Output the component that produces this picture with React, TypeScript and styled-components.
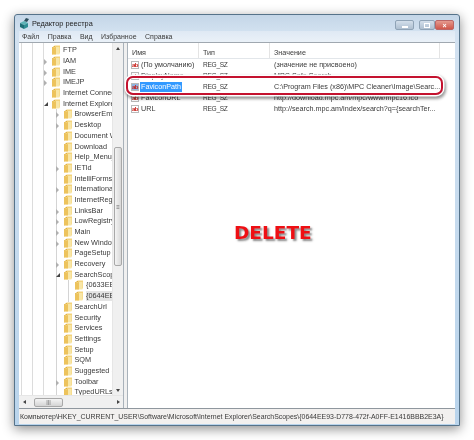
import React from "react";
import styled, { createGlobalStyle } from "styled-components";

const GlobalStyle = createGlobalStyle`
  html, body {
    margin: 0;
    padding: 0;
    background: #fff;
    overflow: hidden;
  }
`;

type Expand = "open" | "closed" | "none";
interface TreeNode {
  name: string;
  level: number;
  expand: Expand;
  selected?: boolean;
}

const treeNodes: TreeNode[] = [
  { name: "FTP", level: 2, expand: "none" },
  { name: "IAM", level: 2, expand: "closed" },
  { name: "IME", level: 2, expand: "closed" },
  { name: "IMEJP", level: 2, expand: "closed" },
  { name: "Internet Connection Wizard", level: 2, expand: "none" },
  { name: "Internet Explorer", level: 2, expand: "open" },
  { name: "BrowserEmulation", level: 3, expand: "closed" },
  { name: "Desktop", level: 3, expand: "closed" },
  { name: "Document Windows", level: 3, expand: "none" },
  { name: "Download", level: 3, expand: "none" },
  { name: "Help_Menu_URLs", level: 3, expand: "none" },
  { name: "IETld", level: 3, expand: "closed" },
  { name: "IntelliForms", level: 3, expand: "none" },
  { name: "International", level: 3, expand: "closed" },
  { name: "InternetRegistry", level: 3, expand: "none" },
  { name: "LinksBar", level: 3, expand: "closed" },
  { name: "LowRegistry", level: 3, expand: "closed" },
  { name: "Main", level: 3, expand: "closed" },
  { name: "New Windows", level: 3, expand: "closed" },
  { name: "PageSetup", level: 3, expand: "none" },
  { name: "Recovery", level: 3, expand: "closed" },
  { name: "SearchScopes", level: 3, expand: "open" },
  { name: "{0633EE93-D776}", level: 4, expand: "none" },
  { name: "{0644EE93-D778}", level: 4, expand: "none", selected: true },
  { name: "SearchUrl", level: 3, expand: "none" },
  { name: "Security", level: 3, expand: "none" },
  { name: "Services", level: 3, expand: "none" },
  { name: "Settings", level: 3, expand: "none" },
  { name: "Setup", level: 3, expand: "none" },
  { name: "SQM", level: 3, expand: "none" },
  { name: "Suggested Sites", level: 3, expand: "none" },
  { name: "Toolbar", level: 3, expand: "closed" },
  { name: "TypedURLs", level: 3, expand: "none" },
];

const values = [
  { name: "(По умолчанию)", data: "(значение не присвоено)" },
  { name: "DisplayName", data: "MPC Safe Search" },
  { name: "FaviconPath", data: "C:\\Program Files (x86)\\MPC Cleaner\\Image\\Searc...", selected: true },
  { name: "FaviconURL", data: "http://download.mpc.am/mpc/www/mpc16.ico" },
  { name: "URL", data: "http://search.mpc.am/index/search?q={searchTer..." },
];

const Folder = () => (
  <svg width="10" height="10" viewBox="0 0 10 10">
    <path d="M1 2.5 L4 .5 V8 L1 9.5 Z" fill="#e0b040" />
    <path d="M4 .5 H9 V8.5 H4 Z" fill="#f3d27a" />
    <path d="M2.5 2 H8.5 V9.5 H2.5 Z" fill="#f8e6a6" />
    <path d="M1 3 L5 2 V9.5 H1 Z" fill="#edc35c" />
  </svg>
);

const AppIcon = () => (
  <svg width="11" height="11" viewBox="0 0 11 11">
    <path d="M1 5 L5 3 L9 5 L5 7 Z" fill="#5fb4b8" />
    <path d="M1 5 V9 L5 11 V7 Z" fill="#1f6f78" />
    <path d="M5 7 V11 L9 9 V5 Z" fill="#2f8d94" />
    <path d="M5 3 L7 0 L10 1 L8 4 Z" fill="#2d4d5c" />
  </svg>
);

const ValueIcon = ({ selected }: { selected?: boolean }) => (
  <ValueIconBox $selected={selected}>ab</ValueIconBox>
);

const Page = styled.div`
  width: 474px;
  height: 440px;
  padding: 14px;
  box-sizing: border-box;
  background: #fff;
  font-family: "Liberation Sans", Arial, sans-serif;
  color: #3a3a3a;
  filter: blur(0.35px);
`;

const Window = styled.div`
  position: relative;
  width: 446px;
  height: 412px;
  box-sizing: border-box;
  display: flex;
  flex-direction: column;
  padding: 0 4px 1px;
  border: 1px solid #56738a;
  border-radius: 3px 3px 0 0;
  background: linear-gradient(180deg, #c4d6e8 0, #d3e2f1 18px, #b9d4ec 100%);
  box-shadow: 0 3px 12px rgba(0, 0, 0, 0.45);
`;

const TitleBar = styled.div`
  height: 16px;
  display: flex;
  align-items: center;
  gap: 2px;
  padding-top: 1px;
  box-sizing: border-box;
  font-size: 7.3px;
  color: #222;
`;

const WindowControls = styled.div`
  margin-left: auto;
  margin-right: 1px;
  align-self: flex-start;
  display: flex;
  margin-top: 4px;
`;

const ControlButton = styled.div<{ $close?: boolean; $wide?: boolean }>`
  width: ${({ $wide }) => ($wide ? "19px" : "16px")};
  height: 10px;
  margin-left: ${({ $close, $wide }) => ($close || $wide ? "0" : "5px")};
  display: flex;
  align-items: center;
  justify-content: center;
  border: 1px solid ${({ $close }) => ($close ? "#b66" : "#8fa3b6")};
  border-radius: 2px;
  box-sizing: border-box;
  background: ${({ $close }) =>
    $close ? "linear-gradient(180deg, #e59a8e, #d0574a)" : "linear-gradient(180deg, #d3dfeb, #aebfd0)"};
  color: #fff;
  font-size: 7px;
  font-weight: 700;
  line-height: 1;
`;

const MinimizeGlyph = styled.span`
  width: 6px;
  height: 2px;
  margin-top: 3px;
  background: #fff;
`;

const MaximizeGlyph = styled.span`
  width: 6px;
  height: 5px;
  box-sizing: border-box;
  border: 1px solid #fff;
`;

const MenuBar = styled.div`
  height: 11px;
  display: flex;
  align-items: center;
  gap: 8.5px;
  padding-left: 3px;
  font-size: 7px;
  background: linear-gradient(180deg, #dfe9f4, #eaf1f8);
`;

const Client = styled.div`
  flex: 1;
  min-height: 0;
  display: flex;
  background: #f0f0f0;
  border-top: 1px solid #a0a8b0;
`;

const TreePane = styled.div`
  width: 104px;
  display: flex;
  flex-direction: column;
  border-right: 1px solid #a9b2ba;
  background: #fff;
`;

const TreeBody = styled.div`
  flex: 1;
  min-height: 0;
  display: flex;
`;

const TreeList = styled.div`
  width: 93px;
  overflow: hidden;
  padding-top: 2px;
  background:
    linear-gradient(#dcdcdc, #dcdcdc) 2px 0 / 1px 100% no-repeat,
    linear-gradient(#dcdcdc, #dcdcdc) 13px 0 / 1px 100% no-repeat,
    linear-gradient(#dcdcdc, #dcdcdc) 24px 0 / 1px 100% no-repeat;
`;

const TreeRow = styled.div<{ $level: number }>`
  position: relative;
  height: 10.69px;
  display: flex;
  align-items: center;
  padding-left: ${({ $level }) => 32 + ($level - 2) * 11.5}px;
  font-size: 7.3px;
  line-height: 10px;
  white-space: nowrap;
  ${({ $level }) =>
    $level === 3 &&
    `background: linear-gradient(#d4d4d4, #d4d4d4) 37px 0 / 1px 100% no-repeat;`}
  ${({ $level }) =>
    $level > 3 &&
    `background: linear-gradient(#d4d4d4, #d4d4d4) 37px 0 / 1px 100% no-repeat,
      linear-gradient(#d4d4d4, #d4d4d4) 49px 0 / 1px 100% no-repeat;`}
`;

const Expander = styled.span<{ $open?: boolean }>`
  position: absolute;
  left: -7px;
  top: 3px;
  width: 0;
  height: 0;
  ${({ $open }) =>
    $open
      ? `border-left: 4px solid transparent; border-bottom: 4px solid #444;`
      : `border-top: 3px solid transparent; border-bottom: 3px solid transparent; border-left: 3px solid #b0b0b0;`}
`;

const FolderSlot = styled.span`
  position: relative;
  flex: none;
  width: 10px;
  height: 10px;
  margin-right: 2px;
`;

const NodeLabel = styled.span<{ $selected?: boolean }>`
  padding-right: 20px;
  background: ${({ $selected }) => ($selected ? "#e4e4e4" : "transparent")};
`;

const VScroll = styled.div`
  width: 10px;
  display: flex;
  flex-direction: column;
  align-items: center;
  background: #f0f0f0;
  border-left: 1px solid #e6e6e6;
`;

const HScroll = styled.div`
  height: 12px;
  display: flex;
  align-items: center;
  background: #f0f0f0;
  border-top: 1px solid #e6e6e6;
`;

const ArrowCell = styled.span`
  flex: none;
  width: 10px;
  height: 10px;
  display: flex;
  align-items: center;
  justify-content: center;
`;

const Arrow = styled.span<{ $dir: "up" | "down" | "left" | "right" }>`
  width: 0;
  height: 0;
  ${({ $dir }) =>
    $dir === "up"
      ? `border-left: 2.5px solid transparent; border-right: 2.5px solid transparent; border-bottom: 3px solid #444;`
      : $dir === "down"
        ? `border-left: 2.5px solid transparent; border-right: 2.5px solid transparent; border-top: 3px solid #444;`
        : $dir === "left"
          ? `border-top: 2.5px solid transparent; border-bottom: 2.5px solid transparent; border-right: 3px solid #444;`
          : `border-top: 2.5px solid transparent; border-bottom: 2.5px solid transparent; border-left: 3px solid #444;`}
`;

const VThumb = styled.div`
  width: 8px;
  height: 119px;
  margin-top: 94px;
  margin-bottom: auto;
  display: flex;
  align-items: center;
  justify-content: center;
  box-sizing: border-box;
  border: 1px solid #a8a8a8;
  border-radius: 2px;
  background: linear-gradient(90deg, #f4f4f4, #d8d8d8);
  color: #666;
  font-size: 6px;
`;

const HThumb = styled.div`
  width: 29px;
  height: 9px;
  margin-left: 5px;
  margin-right: auto;
  display: flex;
  align-items: center;
  justify-content: center;
  box-sizing: border-box;
  border: 1px solid #a8a8a8;
  border-radius: 2px;
  background: linear-gradient(180deg, #f4f4f4, #d4d4d4);
  color: #666;
  font-size: 6px;
  line-height: 1;
`;

const Splitter = styled.div`
  width: 3px;
  background: #f0f0f0;
`;

const ListPane = styled.div`
  flex: 1;
  min-width: 0;
  background: #fff;
  border-left: 1px solid #a9b2ba;
  overflow: hidden;
`;

const ListHeader = styled.div`
  height: 15px;
  display: grid;
  grid-template-columns: 71px 71px 170px 1fr;
  align-items: center;
  border-bottom: 1px solid #e2e6ea;
  margin-bottom: 1px;
`;

const HeaderCell = styled.div`
  height: 100%;
  display: flex;
  align-items: center;
  padding: 3px 0 0 4px;
  box-sizing: border-box;
  border-right: 1px solid #e4e4e4;
  font-size: 7.2px;
`;

const ValueRow = styled.div`
  height: 10.9px;
  display: grid;
  grid-template-columns: 71px 71px 1fr;
  align-items: center;
  font-size: 7.2px;
  line-height: 10px;
  white-space: nowrap;
`;

const NameCell = styled.div`
  display: flex;
  align-items: center;
  gap: 1px;
  padding-left: 3px;
`;

const ValueIconBox = styled.span<{ $selected?: boolean }>`
  flex: none;
  width: 8px;
  height: 8px;
  box-sizing: border-box;
  border: 1px solid #b9b9b9;
  background: ${({ $selected }) => ($selected ? "#8fb4e0" : "#fff")};
  color: #c8201a;
  font-size: 6px;
  font-weight: 700;
  line-height: 6px;
  text-align: center;
  letter-spacing: -0.5px;
`;

const NameText = styled.span<{ $selected?: boolean }>`
  padding: 0 1px;
  ${({ $selected }) => $selected && `background: #3399ff; color: #fff;`}
`;

const TextCell = styled.div`
  padding-left: 4px;
`;

const TypeCell = styled(TextCell)`
  font-size: 6.6px;
  letter-spacing: -0.3px;
`;

const StatusBar = styled.div`
  height: 15px;
  display: flex;
  align-items: center;
  padding-left: 1px;
  background: #f2f0ef;
  border-top: 1px solid #8f979e;
  font-size: 6.95px;
  white-space: nowrap;
  overflow: hidden;
`;

const Highlight = styled.div`
  position: absolute;
  left: 111px;
  top: 61px;
  width: 317px;
  height: 19px;
  box-sizing: border-box;
  border: 2px solid #c4122f;
  border-radius: 7px;
  box-shadow:
    inset 0 0 0 1px rgba(255, 255, 255, 0.8),
    0 0 0 1.5px #fff,
    1px 2px 3px 2px rgba(0, 0, 0, 0.4);
`;

const DeleteLabel = styled.div`
  position: absolute;
  left: 219px;
  top: 208px;
  font-family: "DejaVu Sans", sans-serif;
  font-size: 18.5px;
  font-weight: 700;
  line-height: 20px;
  color: #ee0f14;
  text-shadow: 2px 2px 2px rgba(60, 60, 60, 0.6);
`;

const App = () => {
  return (
    <>
      <GlobalStyle />
      <Page>
        <Window>
          <TitleBar>
            <AppIcon />
            Редактор реестра
            <WindowControls>
              <ControlButton $wide><MinimizeGlyph /></ControlButton>
              <ControlButton><MaximizeGlyph /></ControlButton>
              <ControlButton $close $wide>×</ControlButton>
            </WindowControls>
          </TitleBar>
          <MenuBar>
            <span>Файл</span>
            <span>Правка</span>
            <span>Вид</span>
            <span>Избранное</span>
            <span>Справка</span>
          </MenuBar>
          <Client>
            <TreePane>
              <TreeBody>
                <TreeList>
                  {treeNodes.map((node) => (
                    <TreeRow key={node.name} $level={node.level}>
                      <FolderSlot>
                        {node.expand !== "none" && <Expander $open={node.expand === "open"} />}
                        <Folder />
                      </FolderSlot>
                      <NodeLabel $selected={node.selected}>{node.name}</NodeLabel>
                    </TreeRow>
                  ))}
                </TreeList>
                <VScroll>
                  <ArrowCell><Arrow $dir="up" /></ArrowCell>
                  <VThumb>≡</VThumb>
                  <ArrowCell><Arrow $dir="down" /></ArrowCell>
                </VScroll>
              </TreeBody>
              <HScroll>
                <ArrowCell><Arrow $dir="left" /></ArrowCell>
                <HThumb>|||</HThumb>
                <ArrowCell><Arrow $dir="right" /></ArrowCell>
              </HScroll>
            </TreePane>
            <Splitter />
            <ListPane>
              <ListHeader>
                <HeaderCell>Имя</HeaderCell>
                <HeaderCell>Тип</HeaderCell>
                <HeaderCell>Значение</HeaderCell>
                <div />
              </ListHeader>
              {values.map((row) => (
                <ValueRow key={row.name}>
                  <NameCell>
                    <ValueIcon selected={row.selected} />
                    <NameText $selected={row.selected}>{row.name}</NameText>
                  </NameCell>
                  <TypeCell>REG_SZ</TypeCell>
                  <TextCell>{row.data}</TextCell>
                </ValueRow>
              ))}
            </ListPane>
          </Client>
          <StatusBar>
            Компьютер\HKEY_CURRENT_USER\Software\Microsoft\Internet Explorer\SearchScopes\{"{0644EE93-D778-472f-A0FF-E1416BBB2E3A}"}
          </StatusBar>
          <Highlight />
          <DeleteLabel>DELETE</DeleteLabel>
        </Window>
      </Page>
    </>
  );
};

export default App;
